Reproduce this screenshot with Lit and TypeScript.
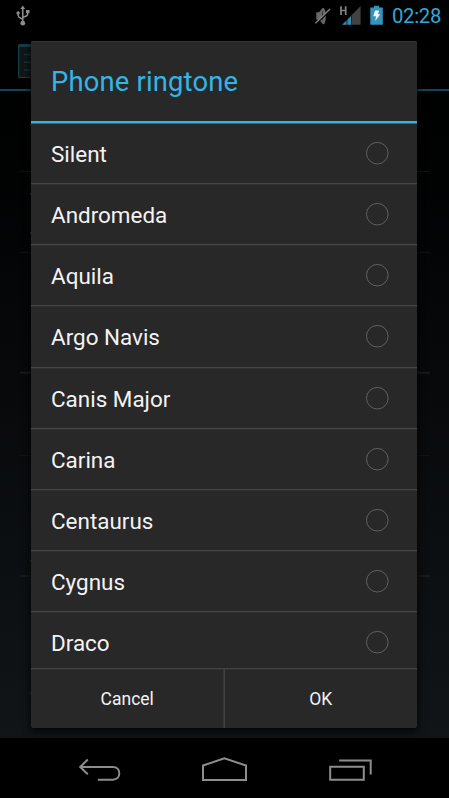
import { LitElement, html, css } from "lit";
import { customElement, property } from "lit/decorators.js";

@customElement("status-bar")
class StatusBar extends LitElement {
  static styles = css`
    :host { display: flex; height: 32px; background: #000; align-items: stretch; position: relative; }
    svg { display: block; width: 390px; height: 32px; flex: none; }
    .clock { font: 400 20.3px/32px Roboto, sans-serif; color: #30a8d8; margin-left: 2px; letter-spacing: -0.3px; white-space: nowrap; }
  `;
  render() {
    return html`
      <svg viewBox="0 0 390 32">
        <g fill="#8c8c8c" stroke="none">
          <circle cx="22.8" cy="23.2" r="2.4" />
          <path d="M22.8 5.6 L25.2 9 H20.4Z" />
          <circle cx="18.1" cy="12.9" r="1.7" />
          <rect x="26" y="10" width="3.5" height="3.2" />
        </g>
        <path d="M22.8 23V8M22.8 19.8C22.3 18 18.2 18.5 18.2 15.5V13M22.8 18C23.3 16 27.7 17 27.7 14V11.5" fill="none" stroke="#8c8c8c" stroke-width="1.5" />
        <path d="M316.3 12.2H319L322.8 7.8Q325.8 8.6 325.8 16Q325.8 23.6 323.3 24.5L319 19.8H316.3Z" fill="#686868" />
        <path d="M322.6 10Q321 16 322.6 22.5Q324.1 16 322.6 10Z" fill="#292929" />
        <path d="M316 24.1L330.6 9.9" stroke="#000" stroke-width="1.4" />
        <path d="M315.4 23.2L330 9" stroke="#808080" stroke-width="1.4" />
        <path d="M341 6.2V15M345.7 6.2V15M341 10.5H345.7" stroke="#858585" stroke-width="1.7" fill="none" />
        <path d="M360.6 6V24.8H342.2Z" fill="#424242" />
        <path d="M351.6 15V24.8H342.2Z" fill="#101010" />
        <path d="M342.2 24.8L346.5 20.4V24.8ZM347.3 19.7L351 15.9V24.8H347.3Z" fill="#2d8caf" />
        <path d="M370.3 7.5H374V5.7H379V7.5H382.8V24.8H370.3Z" fill="#3494bb" />
        <path d="M375 10.5H379.1L378 14.2H380.3L375.3 21L376 16.2H373.3Z" fill="#f1f7f9" />
      </svg>
      <span class="clock">02:28</span>
    `;
  }
}

@customElement("settings-backdrop")
class SettingsBackdrop extends LitElement {
  static styles = css`
    :host { display: block; }
    svg { display: block; width: 449px; height: 706px; }
  `;
  render() {
    return html`
      <svg viewBox="0 32 449 706">
        <defs>
          <linearGradient id="night" x1="0" y1="0" x2="0" y2="1">
            <stop offset="0" stop-color="#000" />
            <stop offset=".2" stop-color="#010202" />
            <stop offset=".5" stop-color="#07090b" />
            <stop offset="1" stop-color="#111518" />
          </linearGradient>
        </defs>
        <rect y="32" width="449" height="706" fill="url(#night)" />
        <rect x="18" y="44" width="30" height="34" rx="1.5" fill="#173c48" />
        <rect x="19.3" y="47" width="30" height="29.8" fill="#111617" />
        <path d="M24 54.5H40M24 62.3H40M24 70H40" stroke="#143142" stroke-width="1.4" />
        <rect y="89" width="449" height="2" fill="#164457" />
        <path d="M20 171.3H430M20 252.3H430M20 455.6H430M20 659H430" stroke="#131415" />
        <path d="M20 372.8H430M20 576H430" stroke="#17191b" stroke-width="2" />
        <path d="M30.5 124V126M30.5 193V195M30.5 232V234M30.5 560V562M30.5 692V694" stroke="#303234" />
      </svg>
    `;
  }
}

@customElement("ringtone-row")
class RingtoneRow extends LitElement {
  @property() label = "";
  static styles = css`
    :host {
      display: flex; box-sizing: border-box; flex: none; height: 61.13px;
      align-items: center; justify-content: space-between;
      padding: 0 28px 0 20px;
      font: 400 22.45px/30px Roboto, sans-serif; color: #f3f3f3;
    }
    .label { padding-top: 2px; }
    .radio { display: block; width: 24px; height: 24px; margin-right: -.3px; }
  `;
  render() {
    return html`
      <span class="label">${this.label}</span>
      <svg class="radio" viewBox="0 0 24 24"><circle cx="12.3" cy="12.2" r="10.8" fill="none" stroke="#606060" stroke-width="1" /></svg>
    `;
  }
}

@customElement("ringtone-dialog")
class RingtoneDialog extends LitElement {
  static styles = css`
    :host {
      display: flex; flex-direction: column; box-sizing: border-box;
      width: 386px; height: 687px; background: #282828; border-radius: 2px;
      box-shadow: 0 3px 7px 1px rgba(0, 0, 0, 0.75), inset 0 1px #353535;
      overflow: hidden; font-family: Roboto, sans-serif;
    }
    .title {
      box-sizing: border-box; height: 82px; flex: none; padding: 1px 20px 0;
      border-bottom: 2px solid #33b5e5; color: #33b5e5;
      font-size: 27.4px; line-height: 81px; letter-spacing: 0.17px; white-space: nowrap;
    }
    .list { height: 545px; flex: none; overflow: hidden; display: flex; flex-direction: column; }
    .divided { border-bottom: 1px solid #454545; box-shadow: inset 0 1px #303030; }
    .divided:first-child { box-shadow: inset 0 1px #2a6d86; }
    .actions { flex: 1; display: flex; border-top: 1px solid #424242; box-shadow: inset 0 1px #303030; }
    .action { flex: 1; text-align: center; font-size: 17.5px; line-height: 61px; color: #f3f3f3; }
    .action + .action { border-left: 1px solid #424242; box-shadow: -1px 0 #363636; }
  `;
  render() {
    const tones = ["Silent", "Andromeda", "Aquila", "Argo Navis", "Canis Major", "Carina", "Centaurus", "Cygnus", "Draco"];
    return html`
      <div class="title">Phone ringtone</div>
      <div class="list">
        ${tones.map((t) => html`<ringtone-row class="divided" label=${t}></ringtone-row>`)}
      </div>
      <div class="actions"><div class="action">Cancel</div><div class="action">OK</div></div>
    `;
  }
}

@customElement("navigation-bar")
class NavigationBar extends LitElement {
  static styles = css`
    :host { display: block; height: 60px; background: #000; }
    svg { display: block; width: 449px; height: 60px; }
  `;
  render() {
    return html`
      <svg viewBox="0 738 449 60" fill="none" stroke="#8d8d8d" stroke-width="2">
        <path d="M87.8 759.5L80.2 767L87.8 774.3M80.2 767H112.8C117 767 119.3 769.7 119.3 773.3C119.3 777 117 779.7 112.8 779.7H97.8" />
        <path d="M203 780V765.5L224.4 758.3L246 765.5V780Z" />
        <path d="M330.2 766.8H363.8V779.7H330.2ZM339.2 760.6H370.7V774.5" />
      </svg>
    `;
  }
}

@customElement("app-root")
class AppRoot extends LitElement {
  static styles = css`
    :host { display: block; width: 449px; height: 798px; overflow: hidden; background: #000; position: relative; }
    .dialog { position: absolute; left: 31px; top: 41px; }
  `;
  render() {
    return html`
      <status-bar></status-bar>
      <settings-backdrop></settings-backdrop>
      <navigation-bar></navigation-bar>
      <ringtone-dialog class="dialog"></ringtone-dialog>
    `;
  }
}
